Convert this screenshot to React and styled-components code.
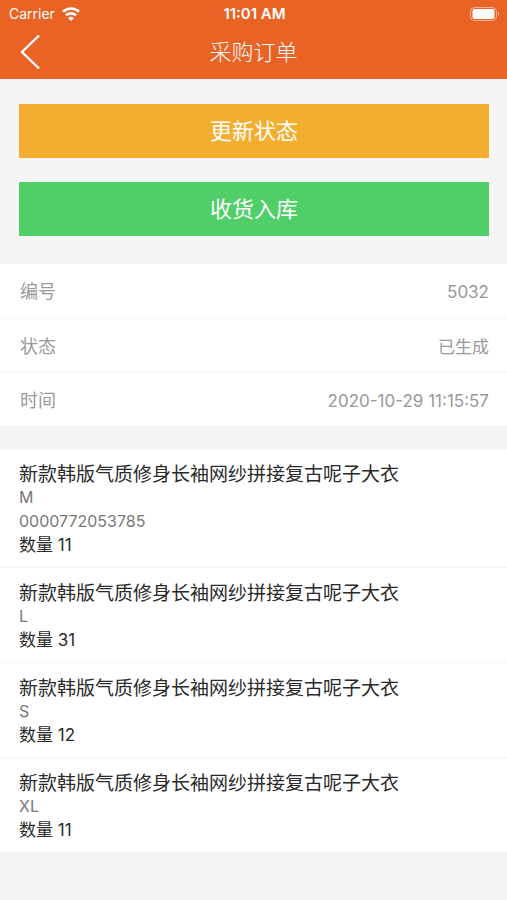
import React from 'react';
import styled, { createGlobalStyle } from 'styled-components';

const GlobalStyle = createGlobalStyle`
  * {
    box-sizing: border-box;
  }

  body {
    margin: 0;
    background: #f5f5f5;
    color: #2a2a2a;
    font-family: Inter, 'Noto Sans CJK SC', sans-serif;
  }
`;

const Header = styled.header`
  background: #e96325;
  color: white;
`;

const StatusBar = styled.div`
  display: grid;
  grid-template-columns: 1fr auto 1fr;
  align-items: center;
  height: 27px;
  padding: 0 7px 0 9px;
  font-size: 14px;
  line-height: 20px;
`;

const Carrier = styled.span`
  display: flex;
  align-items: center;
  gap: 7px;
`;

const Clock = styled.time`
  font-size: 15px;
  font-weight: 600;
`;

const BatteryIcon = styled.svg`
  justify-self: end;
`;

const NavBar = styled.nav`
  display: grid;
  grid-template-columns: 60px 1fr 60px;
  align-items: center;
  padding-bottom: 2px;
`;

const BackButton = styled.button`
  display: flex;
  align-items: center;
  height: 50px;
  padding: 0 0 0 20px;
  border: none;
  background: none;
  color: inherit;
  cursor: pointer;
`;

const Title = styled.h1`
  margin: 0;
  font-size: 22px;
  font-weight: 300;
  line-height: 32px;
  text-align: center;
`;

const Actions = styled.div`
  display: flex;
  flex-direction: column;
  gap: 24px;
  padding: 25px 18px 28px 19px;
`;

const ActionButton = styled.button`
  height: 54px;
  padding: 0 0 4px;
  border: none;
  background: ${({ $color }) => $color};
  color: white;
  font-family: inherit;
  font-size: 22px;
  font-weight: 400;
  cursor: pointer;
`;

const InfoList = styled.dl`
  margin: 0 0 23px;
  background: white;
`;

const InfoRow = styled.div`
  display: flex;
  justify-content: space-between;
  align-items: center;
  height: 54px;
  padding: 2px 18px 0 20px;
  color: #999;
  font-size: 18px;
  line-height: 26px;

  & + & {
    border-top: 1px solid #f5f5f5;
  }
`;

const InfoValue = styled.dd`
  margin: 0;
  font-size: 17px;
`;

const ItemList = styled.ul`
  margin: 0;
  padding: 0;
  background: white;
  list-style: none;
`;

const Item = styled.li`
  padding: 16px 19px 10px;
  font-size: 16px;
  line-height: 24px;

  & + & {
    border-top: 1px solid #f5f5f5;
  }
`;

const ItemName = styled.h2`
  margin: 0;
  font-size: 19px;
  font-weight: 400;
  line-height: 20px;
`;

const ItemDetail = styled.div`
  color: #777;
`;

const Quantity = styled.div`
  font-size: 17px;
`;

const order = [
  { label: '编号', value: '5032' },
  { label: '状态', value: '已生成' },
  { label: '时间', value: '2020-10-29 11:15:57' },
];

const items = [
  { size: 'M', barcode: '0000772053785', quantity: 11 },
  { size: 'L', quantity: 31 },
  { size: 'S', quantity: 12 },
  { size: 'XL', quantity: 11 },
];

const App = () => {
  return (
    <>
      <GlobalStyle />
      <Header>
        <StatusBar>
          <Carrier>
            Carrier
            <svg width="18" height="14" viewBox="0 0 18 14" fill="none" stroke="currentColor" strokeWidth="2.6" aria-hidden="true">
              <path d="M1 4.8a11.5 11.5 0 0 1 16 0" />
              <path d="M4 8.4a7.2 7.2 0 0 1 10 0" />
              <path d="M9 14 6.2 11.2a4 4 0 0 1 5.6 0Z" fill="currentColor" stroke="none" />
            </svg>
          </Carrier>
          <Clock>11:01 AM</Clock>
          <BatteryIcon width="30" height="14" viewBox="0 0 30 14" aria-hidden="true">
            <rect x="0.5" y="0.5" width="26" height="13" rx="4" fill="none" stroke="white" strokeOpacity="0.5" />
            <rect x="2.5" y="2" width="22" height="10" rx="2" fill="white" />
            <path d="M28 5v4a2.2 2.2 0 0 0 0-4Z" fill="white" fillOpacity="0.5" />
          </BatteryIcon>
        </StatusBar>
        <NavBar>
          <BackButton aria-label="返回">
            <svg width="20" height="36" viewBox="0 0 20 36" fill="none" stroke="currentColor" strokeWidth="2.4" aria-hidden="true">
              <path d="M19 1.5 2 18l17 16.5" />
            </svg>
          </BackButton>
          <Title>采购订单</Title>
        </NavBar>
      </Header>
      <main>
        <Actions>
          <ActionButton $color="#f3ae30">更新状态</ActionButton>
          <ActionButton $color="#50cf69">收货入库</ActionButton>
        </Actions>
        <InfoList>
          {order.map((row) => (
            <InfoRow key={row.label}>
              <dt>{row.label}</dt>
              <InfoValue>{row.value}</InfoValue>
            </InfoRow>
          ))}
        </InfoList>
        <ItemList>
          {items.map((item) => (
            <Item key={item.size}>
              <ItemName>新款韩版气质修身长袖网纱拼接复古呢子大衣</ItemName>
              <ItemDetail>{item.size}</ItemDetail>
              {item.barcode && <ItemDetail>{item.barcode}</ItemDetail>}
              <Quantity>数量 {item.quantity}</Quantity>
            </Item>
          ))}
        </ItemList>
      </main>
    </>
  );
};

export default App;
